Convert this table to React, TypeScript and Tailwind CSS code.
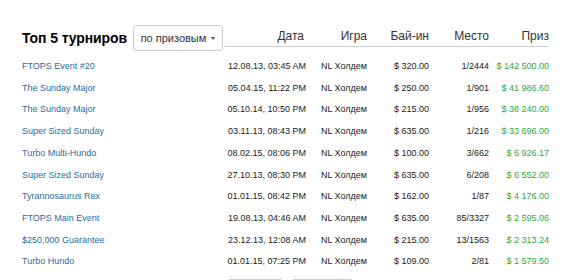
interface Tournament {
  name: string;
  date: string;
  game: string;
  buyIn: string;
  place: string;
  prize: string;
}

const tournaments: Tournament[] = [
  { name: 'FTOPS Event #20', date: '12.08.13, 03:45 AM', game: 'NL Холдем', buyIn: '$ 320.00', place: '1/2444', prize: '$ 142 500.00' },
  { name: 'The Sunday Major', date: '05.04.15, 11:22 PM', game: 'NL Холдем', buyIn: '$ 250.00', place: '1/901', prize: '$ 41 986.60' },
  { name: 'The Sunday Major', date: '05.10.14, 10:50 PM', game: 'NL Холдем', buyIn: '$ 215.00', place: '1/956', prize: '$ 38 240.00' },
  { name: 'Super Sized Sunday', date: '03.11.13, 08:43 PM', game: 'NL Холдем', buyIn: '$ 635.00', place: '1/216', prize: '$ 33 696.00' },
  { name: 'Turbo Multi-Hundo', date: '08.02.15, 08:06 PM', game: 'NL Холдем', buyIn: '$ 100.00', place: '3/662', prize: '$ 6 926.17' },
  { name: 'Super Sized Sunday', date: '27.10.13, 08:30 PM', game: 'NL Холдем', buyIn: '$ 635.00', place: '6/208', prize: '$ 6 552.00' },
  { name: 'Tyrannosaurus Rex', date: '01.01.15, 08:42 PM', game: 'NL Холдем', buyIn: '$ 162.00', place: '1/87', prize: '$ 4 176.00' },
  { name: 'FTOPS Main Event', date: '19.08.13, 04:46 AM', game: 'NL Холдем', buyIn: '$ 635.00', place: '85/3327', prize: '$ 2 595.06' },
  { name: '$250,000 Guarantee', date: '23.12.13, 12:08 AM', game: 'NL Холдем', buyIn: '$ 215.00', place: '13/1563', prize: '$ 2 313.24' },
  { name: 'Turbo Hundo', date: '01.01.15, 07:25 PM', game: 'NL Холдем', buyIn: '$ 109.00', place: '2/81', prize: '$ 1 579.50' },
];

export default function App() {
  return (
    <div className="w-[578px] h-[280px] overflow-hidden bg-white text-[#333] whitespace-nowrap font-['Liberation_Sans',Arial,sans-serif]">
      <div className="pl-[22px] pt-[25px]">
        {/* header */}
        <div className="flex items-start">
          <div className="flex items-center w-[203px] h-[26px] shrink-0">
            <h2 className="w-[111px] shrink-0 text-[14px] font-bold text-black tracking-[-0.1px]">Топ 5 турниров</h2>
            <button className="flex items-center justify-center shrink-0 h-[26px] w-[90px] border border-[#ccc] rounded-[3px] text-[11px] text-[#333]">
              по призовым
              <span className="ml-[5px] w-0 h-0 border-l-[2.5px] border-r-[2.5px] border-t-[3px] border-l-transparent border-r-transparent border-t-[#555]" />
            </button>
          </div>
          <div className="flex shrink-0 mt-[2px] h-[20px] border-b border-[#cfcfcf] text-[12px] text-[#333] leading-[18px]">
            <div className="w-[79px] text-right">Дата</div>
            <div className="w-[63px] text-right">Игра</div>
            <div className="w-[62px] text-right">Бай-ин</div>
            <div className="w-[60px] text-right">Место</div>
            <div className="w-[60px] text-right">Приз</div>
          </div>
        </div>

        {/* rows */}
        <div className="mt-[5px] text-[9px]">
          {tournaments.map((t, i) => (
            <div key={i} className="flex items-center h-[21.7px]">
              <div className="w-[204px] shrink-0 text-[#2b6ca3]">{t.name}</div>
              <div className="w-[80px] shrink-0 text-right text-[#222]">{t.date}</div>
              <div className="w-[61px] shrink-0 text-right text-[#222]">{t.game}</div>
              <div className="w-[62px] shrink-0 text-right text-[#222]">{t.buyIn}</div>
              <div className="w-[60px] shrink-0 text-right text-[#222]">{t.place}</div>
              <div className="w-[60px] shrink-0 text-right text-[#2ea843]">{t.prize}</div>
            </div>
          ))}
        </div>

        {/* pagination */}
        <div className="flex gap-[8px] ml-[205px] mt-[6px]">
          <div className="w-[56px] h-[20px] border border-[#ccc] rounded-[3px]" />
          <div className="w-[62px] h-[20px] border border-[#ccc] rounded-[3px]" />
        </div>
      </div>
    </div>
  );
}
